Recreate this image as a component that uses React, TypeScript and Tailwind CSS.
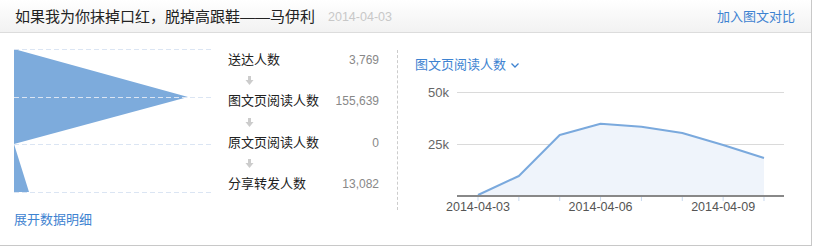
import React from "react"

const font = { fontFamily: '"Liberation Sans", "Noto Sans CJK SC", sans-serif' }

const funnelRows = [
    { label: "送达人数", value: "3,769" },
    { label: "图文页阅读人数", value: "155,639" },
    { label: "原文页阅读人数", value: "0" },
    { label: "分享转发人数", value: "13,082" },
]

// chart points in svg coords (svg origin = column left / below title)
const tickX = Array.from({ length: 8 }, (_, i) => 80 + i * 40.857)
const pointY = [120, 101, 60, 48.7, 51.7, 58, 70, 83]

function DownArrow() {
    return (
        <svg width="9" height="9" viewBox="0 0 9 9">
            <rect x="3" y="0" width="3" height="5" fill="#cccccc" />
            <polygon points="0.5,4 8.5,4 4.5,9" fill="#cccccc" />
        </svg>
    )
}

function Funnel() {
    return (
        <svg width="197" height="145" viewBox="0 0 197 145">
            <polygon points="0,0 174,48 0,95" fill="#7dabdc" />
            <polygon points="0,95 0,143 15,143" fill="#7dabdc" />
            {[0.5, 48.5, 95.5, 143.5].map((y) => (
                <line key={y} x1="0" x2="197" y1={y} y2={y} stroke="#dbe5f3" strokeDasharray="5 3" />
            ))}
        </svg>
    )
}

function ReadChart() {
    const pts = tickX.map((x, i) => `${x},${pointY[i]}`).join(" ")
    const area = `${pts} ${tickX[7]},120 ${tickX[0]},120`
    return (
        <svg width="413" height="145" viewBox="0 0 413 145" style={font}>
            <line x1="59" x2="386" y1="17.5" y2="17.5" stroke="#dadada" />
            <line x1="59" x2="386" y1="69.5" y2="69.5" stroke="#dadada" />
            <polygon points={area} fill="#eff4fb" />
            <polyline points={pts} fill="none" stroke="#7aa9dd" strokeWidth="2" strokeLinejoin="round" />
            {tickX.map((x) => (
                <line key={x} x1={x} x2={x} y1="121" y2="126" stroke="#c8d9ee" />
            ))}
            <line x1="59" x2="386" y1="121" y2="121" stroke="#888888" strokeWidth="2" />
            <text x="51" y="22" textAnchor="end" fontSize="13" fill="#666">50k</text>
            <text x="51" y="74" textAnchor="end" fontSize="13" fill="#666">25k</text>
            {[0, 3, 6].map((i, k) => (
                <text key={i} x={tickX[i]} y="136" textAnchor="middle" fontSize="12.5" fill="#555">
                    {["2014-04-03", "2014-04-06", "2014-04-09"][k]}
                </text>
            ))}
        </svg>
    )
}

export default function App() {
    return (
        <div className="w-[812px] h-[246px] bg-white border-r border-b border-[#c8c8c8] flex flex-col" style={font}>
            <div className="h-[33px] shrink-0 flex items-center pl-[15px] pr-[16px] pt-px border-b border-[#dcdcdc] bg-gradient-to-b from-white to-[#f2f2f2]">
                <span className="text-[15px] leading-5 text-[#222]">如果我为你抹掉口红，脱掉高跟鞋——马伊利</span>
                <span className="ml-[13px] text-[12.5px] leading-5 text-[#c8c8c8]">2014-04-03</span>
                <span className="ml-auto text-[13px] leading-5 text-[#3e83d1]">加入图文对比</span>
            </div>

            <div className="flex flex-1 min-h-0">
                <div className="w-[211px] shrink-0 pl-[14px] pt-[16px] flex flex-col">
                    <Funnel />
                    <span className="mt-[16px] text-[13px] leading-5 text-[#3e83d1]">展开数据明细</span>
                </div>

                <div className="w-[168px] shrink-0 pl-[17px] pt-[17px] flex flex-col">
                    {funnelRows.map((row, i) => (
                        <React.Fragment key={row.label}>
                            <div className="h-5 flex items-center justify-between">
                                <span className="text-[13px] text-[#222]">{row.label}</span>
                                <span className="text-[12px] text-[#888]">{row.value}</span>
                            </div>
                            {i < 3 && (
                                <div className={`${i === 1 ? "h-[22px]" : "h-[21px]"} flex items-center pl-[17px]`}>
                                    <DownArrow />
                                </div>
                            )}
                        </React.Fragment>
                    ))}
                </div>

                <div className="ml-[18px] mt-[17px] h-[160px] w-0 border-l border-dashed border-[#cccccc]" />

                <div className="flex-1 flex flex-col pt-[22px]">
                    <div className="h-5 pl-[17px] flex items-center gap-[5px] text-[13px] text-[#3e83d1]">
                        <span>图文页阅读人数</span>
                        <svg width="8" height="5" viewBox="0 0 8 5">
                            <polyline points="0.5,0.5 4,4 7.5,0.5" fill="none" stroke="#3e83d1" strokeWidth="1.3" />
                        </svg>
                    </div>
                    <ReadChart />
                </div>
            </div>
        </div>
    )
}
